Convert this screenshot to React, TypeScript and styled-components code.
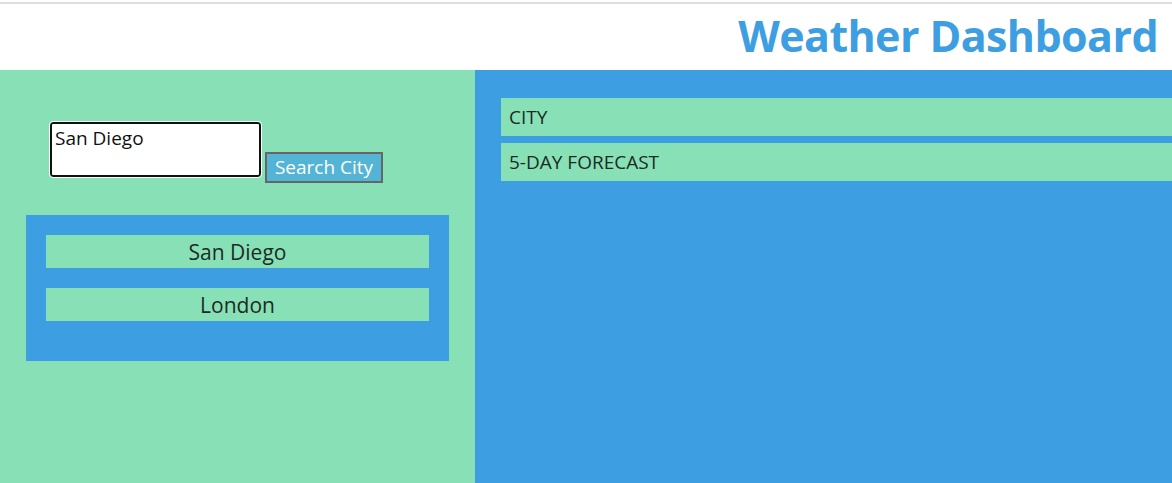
import React from "react";
import styled, { createGlobalStyle } from "styled-components";

const GlobalStyle = createGlobalStyle`
	html, body {
		margin: 0;
		padding: 0;
		background: #ffffff;
		font-family: "Open Sans", "Noto Sans", sans-serif;
		color: #1d2a25;
	}
`;

const Page = styled.div`
	width: 100%;
	height: 483px;
	display: flex;
	flex-direction: column;
	overflow: hidden;
`;

const TopLine = styled.div`
	margin-top: 2px;
	height: 2px;
	background-color: #dcdce2;
`;

const Header = styled.header`
	height: 66px;
	box-sizing: border-box;
	display: flex;
	align-items: center;
	justify-content: flex-end;
	padding: 0 14px 4px 0;

	h1 {
		margin: 0;
		font-size: 43px;
		font-weight: 700;
		color: #3e9ee2;
		letter-spacing: -0.6px;
	}
`;

const Main = styled.div`
	flex: 1;
	display: grid;
	grid-template-columns: 475px 1fr;
`;

const SearchPanel = styled.aside`
	background-color: #88e1b6;
	padding: 52px 26px 0;
`;

const SearchForm = styled.form`
	display: flex;
	align-items: flex-end;
	gap: 4px;
	padding-left: 24px;
	margin-bottom: 38px;
`;

const CityInput = styled.input`
	box-sizing: border-box;
	width: 211px;
	height: 55px;
	border: 2px solid #111;
	border-radius: 3px;
	outline: 1px solid #fff;
	padding: 0 3px 24px;
	font-family: inherit;
	font-size: 19px;
	color: #111;
	background: #fff;
`;

const SearchButton = styled.button`
	box-sizing: border-box;
	width: 118px;
	height: 31px;
	margin-bottom: -6px;
	background-color: #54b4d6;
	border: 2px solid #666;
	color: #fff;
	font-family: inherit;
	font-size: 19px;
	line-height: 1;
	padding: 0;
`;

const HistoryBox = styled.ul`
	list-style: none;
	margin: 0;
	width: 423px;
	box-sizing: border-box;
	background-color: #3e9ee2;
	padding: 20px 20px 40px;
	display: flex;
	flex-direction: column;
	gap: 20px;
`;

const HistoryItem = styled.li`
	height: 33px;
	background-color: #88e1b6;
	display: flex;
	align-items: center;
	justify-content: center;
	font-size: 21px;
`;

const ResultsPanel = styled.section`
	background-color: #3e9ee2;
	padding: 28px 0 0 26px;
	display: flex;
	flex-direction: column;
	gap: 7px;
`;

const ResultBar = styled.div`
	height: 38px;
	background-color: #88e1b6;
	display: flex;
	align-items: center;
	padding-left: 8px;
	font-size: 19px;
`;

const cities = ["San Diego", "London"];

const App = () => {
	return (
		<Page>
			<GlobalStyle />
			<TopLine />
			<Header>
				<h1>Weather Dashboard</h1>
			</Header>
			<Main>
				<SearchPanel>
					<SearchForm onSubmit={(e) => e.preventDefault()}>
						<CityInput defaultValue="San Diego" />
						<SearchButton type="submit">Search City</SearchButton>
					</SearchForm>
					<HistoryBox>
						{cities.map((city) => (
							<HistoryItem key={city}>{city}</HistoryItem>
						))}
					</HistoryBox>
				</SearchPanel>
				<ResultsPanel>
					<ResultBar>CITY</ResultBar>
					<ResultBar>5-DAY FORECAST</ResultBar>
				</ResultsPanel>
			</Main>
		</Page>
	);
};

export default App;
